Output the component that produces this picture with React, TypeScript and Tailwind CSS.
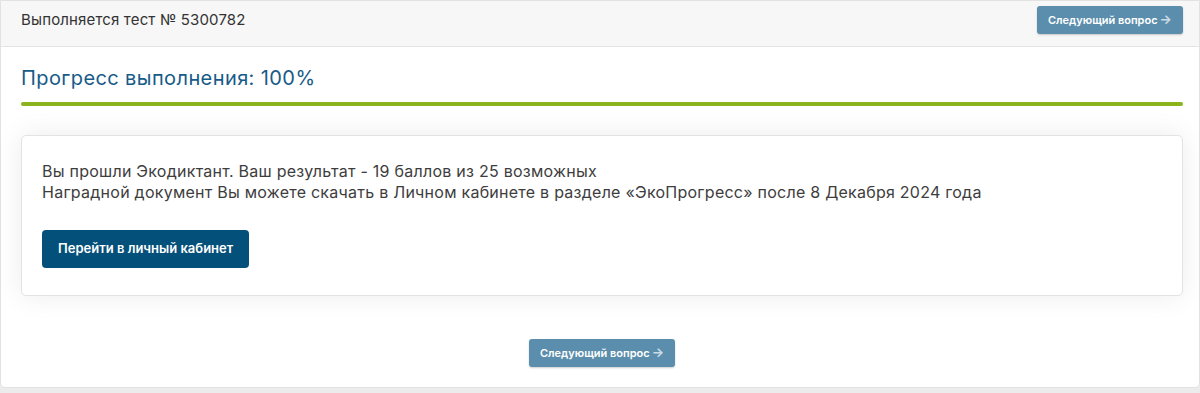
import React from "react";

const NextButton = () => {
  return (
    <button className="h-[28px] px-[11px] rounded-[3px] bg-[#5b8eac] text-white text-[11px] font-semibold shadow-[0_1px_2px_rgba(0,0,0,0.2)] flex items-center gap-[2px]">
      Следующий вопрос
      <span className="text-[#c9dbe6] text-[13px] font-bold">→</span>
    </button>
  );
};

const App = () => {
  return (
    <div
      className="min-h-[393px] bg-[#ececec] text-[#333]"
      style={{ fontFamily: "Inter, 'Noto Sans', sans-serif" }}
    >
      <div className="bg-white border border-[#e2e2e2] rounded-b-[5px] h-[388px]">
        <div className="h-[46px] bg-[#f7f7f7] border-b border-[#e4e4e4] flex items-start justify-between pl-5 pr-4 pt-[5px]">
          <span className="text-[15px] leading-[28px] tracking-[0.15px] text-[#333]">Выполняется тест № 5300782</span>
          <NextButton />
        </div>
        <div className="pl-5 pr-4 pt-[19px]">
          <h2 className="text-[20px] leading-[24px] tracking-[0.4px] text-[#175b88]">Прогресс выполнения: 100%</h2>
          <div className="mt-3 h-[4px] rounded-full bg-[#8bb31b]" />
          <div className="mt-[29px] bg-white border border-[#e3e3e3] rounded-[5px] shadow-[0_0_28px_rgba(0,0,0,0.08)] px-5 pt-[25px] pb-[27px]">
            <p className="text-[16px] leading-[21px] tracking-[0.25px] text-[#3d3d3d]">
              Вы прошли Экодиктант. Ваш результат - 19 баллов из 25 возможных
              <br />
              Наградной документ Вы можете скачать в Личном кабинете в разделе «ЭкоПрогресс» после 8 Декабря 2024 года
            </p>
            <button className="mt-[27px] h-[38px] px-[16px] rounded-[4px] bg-[#03507b] text-white text-[13px] font-semibold">
              Перейти в личный кабинет
            </button>
          </div>
          <div className="mt-[43px] flex justify-center">
            <NextButton />
          </div>
        </div>
      </div>
    </div>
  );
};

export default App;
